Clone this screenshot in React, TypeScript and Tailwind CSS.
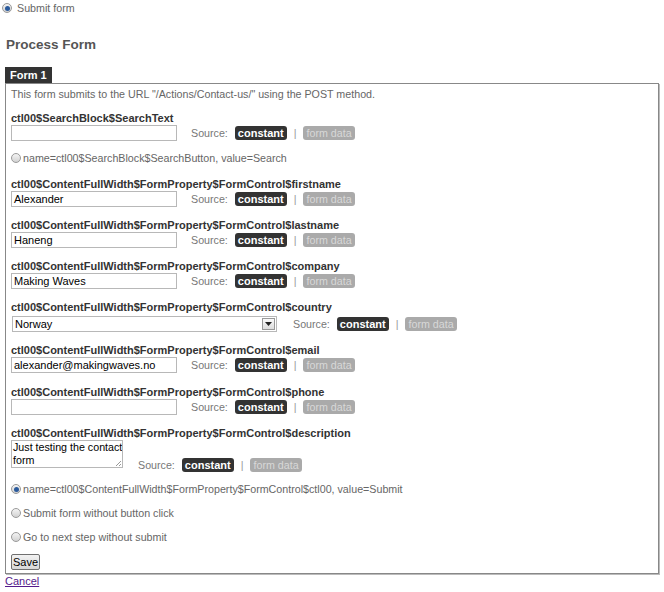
import React from 'react';

function Radio({ checked = false }: { checked?: boolean }) {
  return (
    <span className="w-[10px] h-[10px] shrink-0 rounded-full border border-[#9a9a9a] bg-gradient-to-b from-[#f4f4f4] to-[#d2d2d2] flex items-center justify-center">
      {checked && <span className="w-[5px] h-[5px] rounded-full bg-[#2a5a9c]" />}
    </span>
  );
}

function RadioRow({ label, checked = false, className = '' }: { label: string; checked?: boolean; className?: string }) {
  return (
    <div className={`flex items-center gap-[2px] leading-[14px] text-[#666] ${className}`}>
      <Radio checked={checked} />
      <span>{label}</span>
    </div>
  );
}

function Source({ className = '' }: { className?: string }) {
  return (
    <div className={`flex items-center leading-[14px] ${className}`}>
      <span className="text-[#777] mr-[7px]">Source:</span>
      <span className="bg-[#333] text-white font-bold text-[11px] rounded-[3px] px-[3px]">constant</span>
      <span className="text-[#999] mx-[7px]">|</span>
      <span className="bg-[#aaa] text-[#d8d8d8] rounded-[3px] px-[3px]">form data</span>
    </div>
  );
}

function Field({ name, value = '', className = '' }: { name: string; value?: string; className?: string }) {
  return (
    <div className={className}>
      <div className="font-bold text-[11px] text-[#333] leading-[14px]">{name}</div>
      <div className="flex items-center">
        <div className="w-[166px] h-[16px] border border-[#b8b8b8] px-[2px] text-[11px] text-black leading-[14px] overflow-hidden">
          {value}
        </div>
        <Source className="ml-[14px]" />
      </div>
    </div>
  );
}

export default function App() {
  const prefix = 'ctl00$ContentFullWidth$FormProperty$FormControl$';

  return (
    <div className="w-[664px] h-[592px] bg-white text-[10.7px] text-[#555] font-['Liberation_Sans',Arial,sans-serif] overflow-hidden">
      {/* Step choice */}
      <RadioRow label="Submit form" checked className="pt-[1px] pl-[2px] gap-[5px]" />

      <h2 className="mt-[22px] ml-[6px] text-[13.5px] font-bold leading-[16px] text-[#555]">Process Form</h2>

      <div className="mt-[14px] mx-[5px]">
        {/* Tab */}
        <div className="w-fit bg-[#333] text-white font-bold text-[11px] leading-[16px] px-[5px]">Form 1</div>

        {/* Form panel */}
        <div className="border border-[#888] shadow-[1px_1px_0_#bbb] pt-[3px] pb-[3px] px-[5px]">
          <p className="leading-[14px] text-[#666]">
            This form submits to the URL "/Actions/Contact-us/" using the POST method.
          </p>

          <Field name="ctl00$SearchBlock$SearchText" className="mt-[10px]" />
          <RadioRow label="name=ctl00$SearchBlock$SearchButton, value=Search" className="mt-[10px]" />

          <Field name={prefix + 'firstname'} value="Alexander" className="mt-[12px]" />
          <Field name={prefix + 'lastname'} value="Haneng" className="mt-[11px]" />
          <Field name={prefix + 'company'} value="Making Waves" className="mt-[11px]" />

          <div className="mt-[11px]">
            <div className="font-bold text-[11px] text-[#333] leading-[14px]">{prefix + 'country'}</div>
            <div className="flex items-center mt-[2px]">
              <div className="w-[265px] h-[16px] ml-[1px] border border-[#b8b8b8] flex items-center justify-between pl-[2px] text-[11px] text-black leading-[14px]">
                <span>Norway</span>
                <span className="w-[13px] h-[12px] mr-[1px] border border-[#999] bg-gradient-to-b from-[#fafafa] to-[#ddd] flex items-center justify-center">
                  <svg width="7" height="4" viewBox="0 0 7 4">
                    <path d="M0 0h7L3.5 4z" fill="#222" />
                  </svg>
                </span>
              </div>
              <Source className="ml-[16px]" />
            </div>
          </div>

          <Field name={prefix + 'email'} value="alexander@makingwaves.no" className="mt-[11px]" />
          <Field name={prefix + 'phone'} className="mt-[12px]" />

          <div className="mt-[11px]">
            <div className="font-bold text-[11px] text-[#333] leading-[14px]">{prefix + 'description'}</div>
            <div className="flex items-end">
              <div className="relative w-[112px] h-[28px] border border-[#b8b8b8] px-[1px] text-[10.7px] text-black leading-[13px] whitespace-nowrap overflow-hidden">
                Just testing the contact
                <br />
                form
                <svg className="absolute right-[1px] bottom-[1px]" width="6" height="6" viewBox="0 0 6 6">
                  <path d="M6 1L1 6M6 4L4 6" stroke="#999" strokeWidth="1" />
                </svg>
              </div>
              <Source className="ml-[15px] mb-[-4px]" />
            </div>
          </div>

          <RadioRow label={'name=' + prefix + 'ctl00, value=Submit'} checked className="mt-[14px]" />
          <RadioRow label="Submit form without button click" className="mt-[10px]" />
          <RadioRow label="Go to next step without submit" className="mt-[10px]" />

          <button className="mt-[10px] block h-[16px] border border-[#707070] rounded-[2px] bg-gradient-to-b from-[#f2f2f2] to-[#d8d8d8] px-[1px] text-black leading-[14px] text-[11px]">
            Save
          </button>
        </div>
      </div>

      <a href="#" className="block ml-[5px] text-[11px] text-[#551a8b] underline leading-[14px]">Cancel</a>
    </div>
  );
}
